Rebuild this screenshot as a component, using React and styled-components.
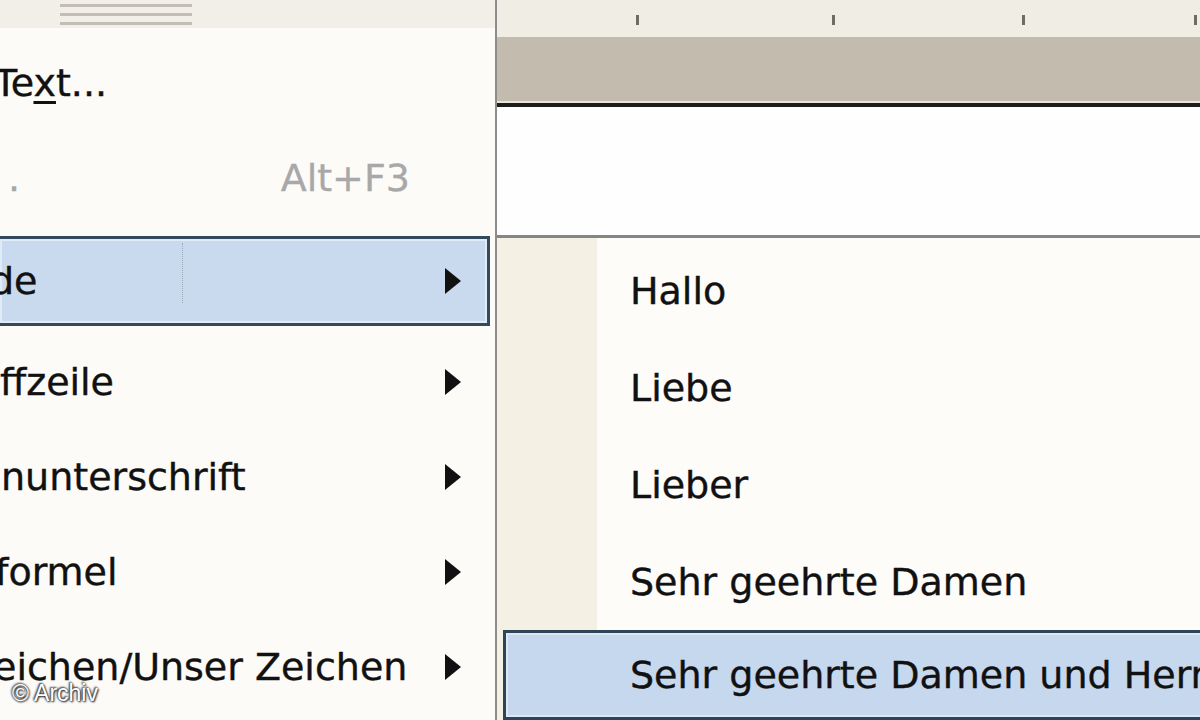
import React from 'react';
import styled, { createGlobalStyle } from 'styled-components';

const GlobalStyle = createGlobalStyle`
	html, body {
		margin: 0;
		padding: 0;
		background: #fdfbf7;
	}
`;

const Page = styled.div`
	position: relative;
	display: flex;
	width: 1200px;
	height: 720px;
	overflow: hidden;
	font-family: "DejaVu Sans", "Verdana", sans-serif;
	font-size: 38px;
	color: #111;
	-webkit-text-stroke: 0.4px #111;
`;

const LeftMenu = styled.div`
	width: 495px;
	flex-shrink: 0;
	display: flex;
	flex-direction: column;
	background: #fdfbf7;
	border-right: 2px solid #8d8c88;
`;

const GripBar = styled.div`
	height: 28px;
	flex-shrink: 0;
	display: flex;
	align-items: center;
	padding-left: 60px;
	margin-bottom: 7px;
	background: #f2efe8;
`;

const Grip = styled.div`
	width: 132px;
	height: 21px;
	background: repeating-linear-gradient(
		to bottom,
		#c2beb6 0px,
		#c2beb6 3px,
		transparent 3px,
		transparent 9px
	);
`;

const Row = styled.div`
	height: 95px;
	flex-shrink: 0;
	display: flex;
	align-items: center;
	justify-content: space-between;
	padding-right: 33px;
	white-space: nowrap;
	box-sizing: border-box;
`;

const ActiveRow = styled(Row)`
	position: relative;
	height: 90px;
	margin: 11px 5px 8px -3px;
	padding-right: 25px;
	border: 3px solid #34495b;
	background: #c9daef;
	box-shadow: inset 0 0 0 2px #e0ebf8;
	&::after {
		content: '';
		position: absolute;
		left: 182px;
		top: 4px;
		height: 60px;
		border-left: 1px dotted #9aa8b8;
	}
`;

const Label = styled.span`
	margin-left: ${p => p.$shift || 0}px;
	color: ${p => (p.$disabled ? '#a6a6a6' : '#111')};
	-webkit-text-stroke: ${p => (p.$disabled ? '0.3px #a6a6a6' : '0.4px #111')};
`;

const Key = styled.u`
	text-decoration-thickness: 3px;
	text-underline-offset: 5px;
`;

const Shortcut = styled.span`
	color: #a8a8a8;
	-webkit-text-stroke: 0.3px #a8a8a8;
	margin-right: 52px;
`;

const RightPane = styled.div`
	flex: 1;
	min-width: 0;
	display: flex;
	flex-direction: column;
`;

const Ruler = styled.div`
	height: 37px;
	flex-shrink: 0;
	background: #f0ede4;
	svg {
		display: block;
	}
`;

const ToolBand = styled.div`
	height: 64px;
	flex-shrink: 0;
	background: #c3bbad;
	border-bottom: 2px solid #e9e5db;
`;

const DocArea = styled.div`
	height: 135px;
	flex-shrink: 0;
	background: #fefefe;
	border-top: 4px solid #1d1d1d;
	border-bottom: 3px solid #858585;
	box-sizing: border-box;
`;

const SubMenu = styled.div`
	flex: 1;
	padding-top: 4px;
	background: linear-gradient(to right, #f5f0e4 0, #f5f0e4 100px, #fdfcf9 100px);
	overflow: hidden;
`;

const SubRow = styled.div`
	height: 97px;
	display: flex;
	align-items: center;
	padding-left: 133px;
	white-space: nowrap;
	box-sizing: border-box;
`;

const SubActiveRow = styled(SubRow)`
	height: 90px;
	margin-left: 6px;
	margin-right: -20px;
	padding-left: 124px;
	border: 3px solid #2f4557;
	background: #c6d8ee;
	box-shadow: inset 0 0 0 2px #dde8f6;
`;

const Watermark = styled.div`
	position: absolute;
	left: 12px;
	bottom: 13px;
	font-family: "Liberation Sans", Arial, sans-serif;
	font-size: 23px;
	color: #ffffff;
	-webkit-text-stroke: 0;
	text-shadow: 0 0 2px #333, 1px 1px 2px #222, -1px -1px 2px #444;
`;

const Arrow = () => (
	<svg width="18" height="28" viewBox="0 0 18 28">
		<path d="M1 1 L17 14 L1 27 Z" fill="#111" />
	</svg>
);

const leftItems = [
	{ text: 'ffzeile', shift: 0 },
	{ text: 'nunterschrift', shift: 1 },
	{ text: 'formel', shift: -5 },
	{ text: 'eichen/Unser Zeichen', shift: -7 },
];

const subItems = ['Hallo', 'Liebe', 'Lieber', 'Sehr geehrte Damen'];

const App = () => {
	return (
		<>
			<GlobalStyle />
			<Page>
				<LeftMenu>
					<GripBar>
						<Grip />
					</GripBar>
					<Row>
						<Label $shift={-6}>Te<Key>x</Key>t...</Label>
					</Row>
					<Row>
						<Label $shift={8} $disabled>.</Label>
						<Shortcut>Alt+F3</Shortcut>
					</Row>
					<ActiveRow>
						<Label $shift={-10}>de</Label>
						<Arrow />
					</ActiveRow>
					{leftItems.map((item, i) => (
						<Row key={i}>
							<Label $shift={item.shift}>{item.text}</Label>
							<Arrow />
						</Row>
					))}
				</LeftMenu>

				<RightPane>
					<Ruler>
						<svg width="703" height="37">
							{[139, 335, 525, 697].map(x => (
								<rect key={x} x={x} y="15" width="3" height="10" fill="#6f6c66" />
							))}
						</svg>
					</Ruler>
					<ToolBand />
					<DocArea />
					<SubMenu>
						{subItems.map(t => (
							<SubRow key={t}>{t}</SubRow>
						))}
						<SubActiveRow>Sehr geehrte Damen und Herren</SubActiveRow>
					</SubMenu>
				</RightPane>

				<Watermark>© Archiv</Watermark>
			</Page>
		</>
	);
};

export default App;
